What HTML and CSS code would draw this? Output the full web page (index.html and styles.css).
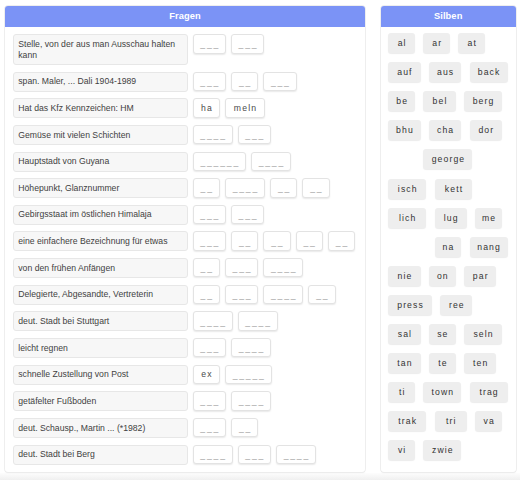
FILE: index.html
```html
<!DOCTYPE html>
<html lang="de">
<head>
<meta charset="utf-8">
<title>Silbenrätsel</title>
<link rel="stylesheet" href="styles.css">
</head>
<body>
<div class="layout">
  <section class="panel questions">
    <header class="panel-head">Fragen</header>
    <div class="rows">
      <div class="row"><div class="clue">Stelle, von der aus man Ausschau halten kann</div><div class="slots"><span class="slot n3">___</span><span class="slot n3">___</span></div></div>
      <div class="row"><div class="clue">span. Maler, ... Dali 1904-1989</div><div class="slots"><span class="slot n3">___</span><span class="slot n2">__</span><span class="slot n3">___</span></div></div>
      <div class="row"><div class="clue">Hat das Kfz Kennzeichen: HM</div><div class="slots"><span class="slot n2 filled">ha</span><span class="slot n4 filled">meln</span></div></div>
      <div class="row"><div class="clue">Gemüse mit vielen Schichten</div><div class="slots"><span class="slot n4">____</span><span class="slot n3">___</span></div></div>
      <div class="row"><div class="clue">Hauptstadt von Guyana</div><div class="slots"><span class="slot n6">______</span><span class="slot n4">____</span></div></div>
      <div class="row"><div class="clue">Höhepunkt, Glanznummer</div><div class="slots"><span class="slot n2">__</span><span class="slot n4">____</span><span class="slot n2">__</span><span class="slot n2">__</span></div></div>
      <div class="row"><div class="clue">Gebirgsstaat im östlichen Himalaja</div><div class="slots"><span class="slot n3">___</span><span class="slot n3">___</span></div></div>
      <div class="row"><div class="clue">eine einfachere Bezeichnung für etwas</div><div class="slots"><span class="slot n3">___</span><span class="slot n2">__</span><span class="slot n2">__</span><span class="slot n2">__</span><span class="slot n2">__</span></div></div>
      <div class="row"><div class="clue">von den frühen Anfängen</div><div class="slots"><span class="slot n2">__</span><span class="slot n3">___</span><span class="slot n4">____</span></div></div>
      <div class="row"><div class="clue">Delegierte, Abgesandte, Vertreterin</div><div class="slots"><span class="slot n2">__</span><span class="slot n3">___</span><span class="slot n4">____</span><span class="slot n2">__</span></div></div>
      <div class="row"><div class="clue">deut. Stadt bei Stuttgart</div><div class="slots"><span class="slot n4">____</span><span class="slot n4">____</span></div></div>
      <div class="row"><div class="clue">leicht regnen</div><div class="slots"><span class="slot n3">___</span><span class="slot n4">____</span></div></div>
      <div class="row"><div class="clue">schnelle Zustellung von Post</div><div class="slots"><span class="slot n2 filled">ex</span><span class="slot n5">_____</span></div></div>
      <div class="row"><div class="clue">getäfelter Fußboden</div><div class="slots"><span class="slot n3">___</span><span class="slot n4">____</span></div></div>
      <div class="row"><div class="clue">deut. Schausp., Martin ... (*1982)</div><div class="slots"><span class="slot n3">___</span><span class="slot n2">__</span></div></div>
      <div class="row"><div class="clue">deut. Stadt bei Berg</div><div class="slots"><span class="slot n4">____</span><span class="slot n3">___</span><span class="slot n4">____</span></div></div>
    </div>
  </section>
  <section class="panel syllables">
    <header class="panel-head">Silben</header>
    <div class="chips">
      <span class="chip c2">al</span><span class="chip c2">ar</span><span class="chip c2">at</span>
      <span class="chip c3">auf</span><span class="chip c3">aus</span><span class="chip c4">back</span>
      <span class="chip c2">be</span><span class="chip c3">bel</span><span class="chip c4">berg</span>
      <span class="chip c3">bhu</span><span class="chip c3">cha</span><span class="chip c3">dor</span>
      <span class="chip c2 used">ex</span><span class="chip c6">george</span><span class="chip c2 used">ha</span>
      <span class="chip c4">isch</span><span class="chip c4">kett</span>
      <span class="chip c4">lich</span><span class="chip c3">lug</span><span class="chip c2">me</span>
      <span class="chip c4 used">meln</span><span class="chip c2">na</span><span class="chip c4">nang</span>
      <span class="chip c3">nie</span><span class="chip c2">on</span><span class="chip c3">par</span>
      <span class="chip c5">press</span><span class="chip c3">ree</span>
      <span class="chip c3">sal</span><span class="chip c2">se</span><span class="chip c4">seln</span>
      <span class="chip c3">tan</span><span class="chip c2">te</span><span class="chip c3">ten</span>
      <span class="chip c2">ti</span><span class="chip c4">town</span><span class="chip c4">trag</span>
      <span class="chip c4">trak</span><span class="chip c3">tri</span><span class="chip c2">va</span>
      <span class="chip c2">vi</span><span class="chip c4">zwie</span>
    </div>
  </section>
</div>
<div class="shade"></div>
</body>
</html>
```

FILE: styles.css
```css
* { box-sizing: border-box; }

html, body {
  margin: 0;
  padding: 0;
  background: #ffffff;
}

body {
  font-family: "Liberation Sans", Arial, sans-serif;
  font-size: 8.67px;
  color: #3d3d3d;
}

.layout {
  display: grid;
  grid-template-columns: 360.6px 135px;
  column-gap: 15.4px;
  padding: 5.7px 0 0 4.7px;
  align-items: stretch;
}

.panel {
  background: #ffffff;
  border-radius: 3px;
  box-shadow: 0 0 0 0.7px #e9e9e9, 0 1px 2px rgba(0, 0, 0, 0.06);
  overflow: hidden;
}

.panel-head {
  height: 21px;
  background: #7b93f6;
  color: #ffffff;
  font-weight: bold;
  font-size: 9.3px;
  line-height: 21px;
  text-align: center;
  letter-spacing: 0.1px;
}

.rows {
  display: flex;
  flex-direction: column;
  gap: 6.67px;
  padding: 7.6px 8px 7.3px 8.6px;
}

.row {
  display: flex;
  align-items: flex-start;
  gap: 4.4px;
}

.clue {
  flex: 0 0 175px;
  background: #f7f7f7;
  border: 1px solid #e7e7e7;
  border-radius: 3px;
  padding: 3.67px 6px 3.67px 4px;
  line-height: 10.67px;
  color: #3f3f3f;
}

.slots {
  display: flex;
  gap: 5px;
}

.slot {
  display: flex;
  align-items: center;
  justify-content: center;
  height: 19.4px;
  background: #ffffff;
  border: 1px solid #e3e3e3;
  border-radius: 3px;
  box-shadow: 0 1px 1.5px rgba(0, 0, 0, 0.09);
  color: #9c9c9c;
  letter-spacing: 1.8px;
  padding-left: 1.8px;
  padding-top: 1px;
}

.slot.filled {
  color: #4a4a4a;
  letter-spacing: 1.2px;
  padding-left: 1.2px;
  padding-top: 0;
}

.n2 { width: 27.3px; }
.n3 { width: 33.3px; }
.n4 { width: 40px; }
.n5 { width: 46.6px; }
.n6 { width: 53.3px; }

.chips {
  display: flex;
  flex-wrap: wrap;
  align-content: flex-start;
  column-gap: 8.4px;
  row-gap: 9.05px;
  padding: 6.6px 7.5px 8px 7.6px;
}

.chip {
  display: flex;
  align-items: center;
  justify-content: center;
  height: 20px;
  background: #eeeeee;
  border-radius: 3px;
  box-shadow: 0 1px 1px rgba(0, 0, 0, 0.08);
  color: #333333;
  letter-spacing: 1.1px;
  padding-left: 1.1px;
}

.chip.used { visibility: hidden; }

.c2 { width: 26.7px; }
.c3 { width: 32.3px; }
.c4 { width: 37.9px; }
.c5 { width: 43.5px; }
.c6 { width: 49.1px; }

.shade {
  height: 12px;
  margin-top: 1px;
  background: linear-gradient(#fdfdfd, #e6e6e6);
}
```
